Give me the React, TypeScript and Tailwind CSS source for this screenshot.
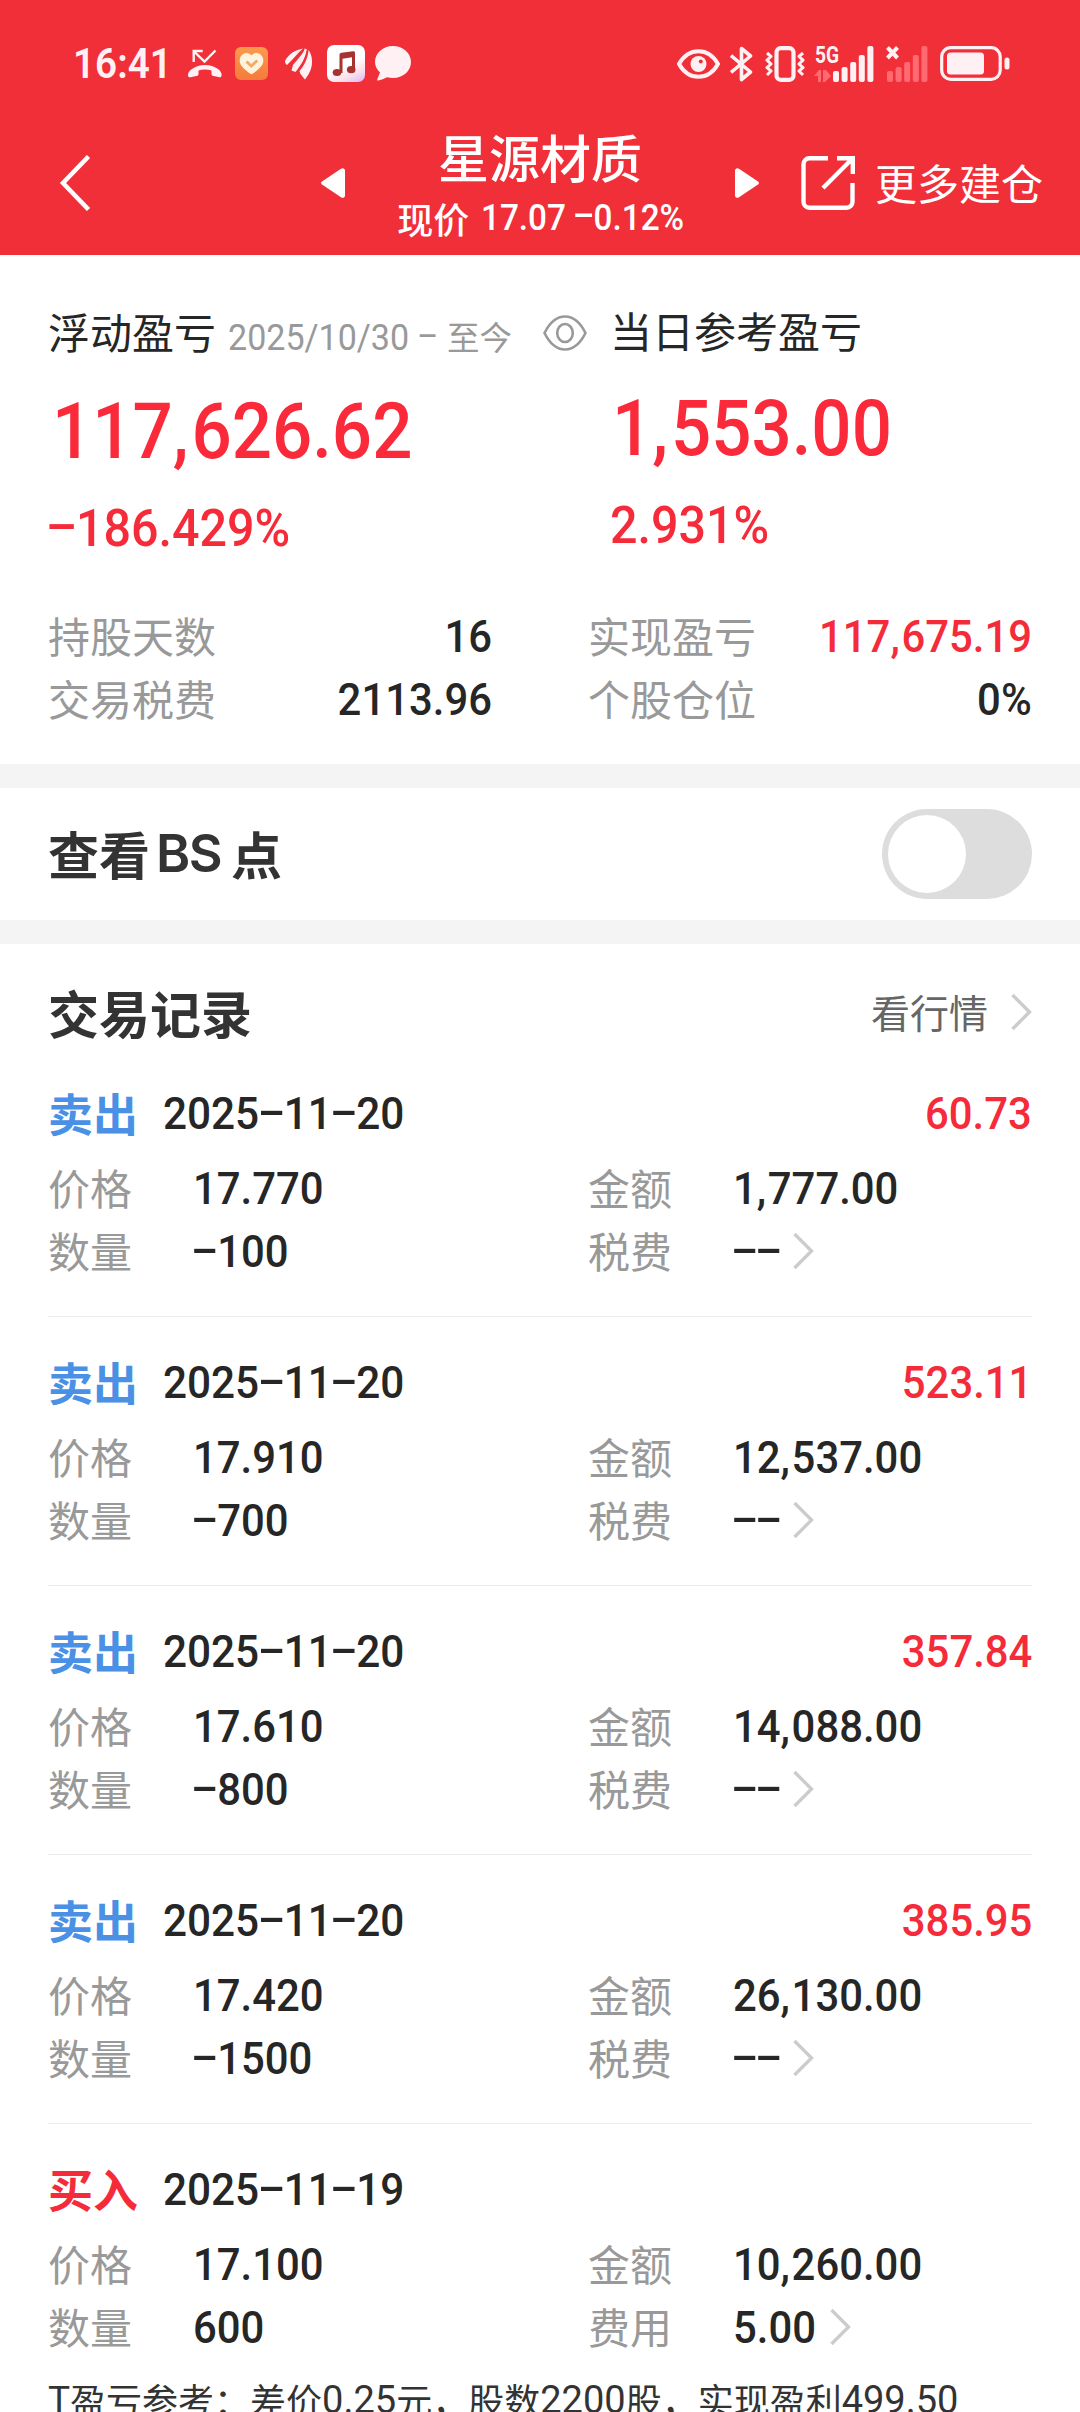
import React from "react";

type Trade = {
  side: "卖出" | "买入";
  date: string;
  profit?: string;
  price: string;
  qty: string;
  amount: string;
  feeLabel: string;
  fee: string;
};

const trades: Trade[] = [
  { side: "卖出", date: "2025-11-20", profit: "60.73", price: "17.770", qty: "-100", amount: "1,777.00", feeLabel: "税费", fee: "--" },
  { side: "卖出", date: "2025-11-20", profit: "523.11", price: "17.910", qty: "-700", amount: "12,537.00", feeLabel: "税费", fee: "--" },
  { side: "卖出", date: "2025-11-20", profit: "357.84", price: "17.610", qty: "-800", amount: "14,088.00", feeLabel: "税费", fee: "--" },
  { side: "卖出", date: "2025-11-20", profit: "385.95", price: "17.420", qty: "-1500", amount: "26,130.00", feeLabel: "税费", fee: "--" },
  { side: "买入", date: "2025-11-19", price: "17.100", qty: "600", amount: "10,260.00", feeLabel: "费用", fee: "5.00" },
];

/** Condensed figures with a wide, vertically centred dash. */
function Num({ children, className = "", right = false }: { children: string; className?: string; right?: boolean }) {
  return (
    <span
      className={`inline-block whitespace-pre font-['Roboto','Noto_Sans_CJK_SC',sans-serif] ${
        right ? "origin-right" : "origin-left"
      } ${className}`}
    >
      {children.split(/([-,])/).map((part, i) =>
        part === "-" ? (
          <span key={i} className="inline-block w-[0.58em] text-center">
            <span className="inline-block -translate-y-[0.07em] scale-x-[1.950]">-</span>
          </span>
        ) : part === "," ? (
          <span key={i} className="mr-[0.04em]">,</span>
        ) : (
          part
        )
      )}
    </span>
  );
}

function Chevron() {
  return (
    <svg width="21" height="38" viewBox="0 0 21 38" fill="none" stroke="#cccccc" strokeWidth="3.4">
      <path d="M1.5 2 18.5 19 1.5 36" />
    </svg>
  );
}

function SignalBars({ className = "" }: { className?: string }) {
  return (
    <g className={className}>
      <rect x="0" y="25" width="6" height="11" rx="2" />
      <rect x="8.6" y="21" width="6" height="15" rx="2" />
      <rect x="17.2" y="16" width="6" height="20" rx="2" />
      <rect x="25.8" y="9" width="6" height="27" rx="2" />
      <rect x="34.4" y="0" width="6" height="36" rx="2" />
    </g>
  );
}

function StatusBar() {
  return (
    <div className="flex h-[127px] items-center pl-[73px] pr-[70px] text-[#fff1f3]">
      <Num className="w-[114px] scale-x-[0.920] text-[42px] font-semibold leading-none">16:41</Num>

      <svg width="36" height="30" viewBox="0 0 36 30" fill="none">
        <path d="M28.5 1.500 17.500 12.500 7 2.500" stroke="currentColor" strokeWidth="2.400" />
        <path d="M6.700 13V2h9" stroke="currentColor" strokeWidth="2.400" />
        <path
          d="M1 27c-1-5 7-11 17-11s18 6 16.500 11c-.4 1.500-1.500 1.400-3 1.100l-5-1.100c-1.500-.3-2-1-2-2.500v-3c-4-1.300-9-1.300-13 0v3c0 1.500-.5 2.200-2 2.500l-5 1.100c-2 .4-3.100.2-3.500-1.100z"
          fill="currentColor"
        />
      </svg>

      <svg className="ml-[12px]" width="33" height="33" viewBox="0 0 33 33">
        <defs>
          <linearGradient id="orange" x1="0" y1="0" x2="0" y2="1">
            <stop offset="0" stopColor="#fb9a4c" />
            <stop offset="1" stopColor="#f57b3c" />
          </linearGradient>
        </defs>
        <rect width="33" height="33" rx="6" fill="url(#orange)" />
        <path
          d="M16.500 8.500C14.500 5.500 9.500 5 6.700 8.300 3.500 12 4.500 16.500 7 19.500c2.500 3 6 5.500 8 7 1 .7 2 .7 3 0 2-1.500 5.500-4 8-7 2.500-3 3.500-7.500.3-11.200-2.800-3.300-7.800-2.800-9.800.2z"
          fill="#fff3e0"
        />
        <path d="M11.500 14.500l4.800 4.500 6-5.500" fill="none" stroke="#f2ab63" strokeWidth="2.800" />
      </svg>

      <svg className="ml-[17px]" width="28" height="32" viewBox="0 0 28 32" fill="currentColor">
        <path d="M0 13C4 5 11 2 18 .5 13 5 10 9 2 17 .5 16 0 14.500 0 13z" />
        <path d="M19.500.5C19 5 12 12 8 17l-1.500 5.500 4 1.500C16 17 20 11 22 1.500z" />
        <path d="M23.500 2C23 10 19 18 14.500 23l1 3 4.500 5.500C25 25 27.500 19 27 12c-.3-4-1.300-7-3.500-10z" />
        <path d="M19 1C17 6 11 10.500 3 18.500M22.500 2C21 11 17 18 12 24.500" stroke="#f12f38" strokeWidth="1.300" fill="none" />
      </svg>

      <svg className="ml-[14px]" width="38" height="37" viewBox="0 0 38 37">
        <defs>
          <linearGradient id="music" x1="0.300" y1="0" x2="0.800" y2="1">
            <stop offset="0.500" stopColor="#ffffff" />
            <stop offset="0.800" stopColor="#fbe0ea" />
            <stop offset="1" stopColor="#dfc2fb" />
          </linearGradient>
        </defs>
        <rect width="38" height="37" rx="7" fill="url(#music)" />
        <g fill="#a8322f">
          <path d="M12.500 10c0-1.300.6-2 2-2.300L26 6.200c1.300-.2 2 .3 2 1.700V24h-3V12.200l-9.500 1.600V28h-3z" />
          <ellipse cx="10" cy="27.500" rx="4.300" ry="3.600" />
          <ellipse cx="24.200" cy="24.700" rx="4.300" ry="3.600" />
        </g>
      </svg>

      <svg className="ml-[10px]" width="36" height="35" viewBox="0 0 36 35" fill="currentColor">
        <path d="M18 0c10 0 18 7 18 16s-8 16-18 16c-2 0-4.200-.3-6-.8-2.500 1.300-6 2.900-9.200 3.400C2 34.700 2 34 2.300 33.200L5 26.500C2 23.500 0 20 0 16 0 7 8 0 18 0z" />
      </svg>

      <div className="ml-auto flex items-center">
        <svg width="43" height="30" viewBox="0 0 43 30" fill="none">
          <path d="M2 15C7 6 14 2.200 21.500 2.200S36 6 41 15c-5 9-12 12.800-19.500 12.800S7 24 2 15z" stroke="currentColor" strokeWidth="4" strokeLinejoin="round" />
          <circle cx="21.500" cy="15" r="8" fill="currentColor" />
          <circle cx="23.800" cy="12.500" r="2" fill="#f12f38" />
        </svg>
        <svg className="ml-[10px]" width="24" height="36" viewBox="0 0 24 36" fill="none" stroke="currentColor" strokeWidth="3.600" strokeLinejoin="round">
          <path d="M1 9.500 20.500 26 11.500 33.500V2.500L20.500 10 1 26.500" />
        </svg>
        <svg className="ml-[11px]" width="40" height="36" viewBox="0 0 40 36" fill="none" stroke="currentColor">
          <rect x="11.500" y="2.200" width="17" height="31.600" rx="4" strokeWidth="4.200" />
          <path d="M2 7l4 3.500-4 3.700L6 18l-4 3.700L6 25l-4 4M38 7l-4 3.500 4 3.700-4 3.800 4 3.700-4 3.300 4 4" strokeWidth="3" strokeLinejoin="round" />
        </svg>
        <div className="relative ml-[28px] h-[36px] w-[41px]">
          <svg width="41" height="36" viewBox="0 0 41 36" fill="currentColor">
            <SignalBars />
          </svg>
          <svg className="absolute -left-[19px] top-[24px]" width="17" height="12" viewBox="0 0 17 12" fill="#ff6a73">
            <path d="M0 6 5 0h2v12H4V6zM9 0h3l5 6-4 4-2 2H9z" />
          </svg>
          <span className="absolute -left-[18px] -top-[3px] origin-left scale-x-[0.800] font-['Roboto',sans-serif] text-[24px] font-bold leading-none">
            5G
          </span>
        </div>
        <svg className="ml-[12px]" width="42" height="36" viewBox="0 0 42 36">
          <g transform="translate(1 0)">
            <SignalBars className="fill-[#ff6a73]" />
          </g>
          <path d="M1.500 1.500 11.500 12M11.500 1.500 1.500 12" stroke="currentColor" strokeWidth="4" />
        </svg>
        <svg className="ml-[12px]" width="70" height="35" viewBox="0 0 70 35" fill="none">
          <rect x="1.700" y="1.700" width="58.500" height="31.600" rx="9" stroke="currentColor" strokeWidth="3.200" />
          <rect x="7" y="6.500" width="37" height="22" rx="3.500" fill="currentColor" />
          <rect x="64.500" y="11.500" width="5" height="12" rx="2.500" fill="currentColor" />
        </svg>
      </div>
    </div>
  );
}

function NavBar() {
  return (
    <div className="flex h-[112px] items-center pl-[59px] text-white">
      <svg width="33" height="56" viewBox="0 0 33 56" fill="none" stroke="currentColor" strokeWidth="4.500">
        <path d="M29.500 1.500 4 28l25.500 26.500" />
      </svg>
      <div className="ml-[229px] flex w-[438px] items-center justify-between">
        <svg width="24" height="30" viewBox="0 0 24 30" fill="currentColor">
          <path d="M1 13.500 20 .8c2-1.300 4-.3 4 2v24.400c0 2.300-2 3.300-4 2L1 16.500c-1.300-.9-1.300-2.100 0-3z" />
        </svg>
        <div className="flex flex-col items-center pt-[7px]">
          <div className="h-[62px] text-[51px] font-medium leading-[60px]">星源材质</div>
          <div className="flex h-[60px] items-center gap-[12px] pl-[3px] text-[36px] font-medium leading-[60px]">
            <span>现价</span>
            <Num className="-mr-[15px] scale-x-[0.925] pt-px">17.07 -0.12%</Num>
          </div>
        </div>
        <svg width="24" height="30" viewBox="0 0 24 30" fill="currentColor">
          <path d="M23 13.500 4 .8C2-.5 0 .5 0 2.800v24.400c0 2.300 2 3.300 4 2l19-12.700c1.300-.9 1.300-2.100 0-3z" />
        </svg>
      </div>
      <svg className="ml-[42px]" width="56" height="54" viewBox="0 0 56 54" fill="none" stroke="currentColor" strokeWidth="4.400">
        <path d="M27 2.200H8.500a6 6 0 0 0-6 6v37.600a6 6 0 0 0 6 6h37a6 6 0 0 0 6-6V27" />
        <path d="M36 2.200h15.800V18M51.500 2.500 22 32" />
      </svg>
      <span className="-mt-[3px] ml-[18px] text-[42px] leading-[60px]">更多建仓</span>
    </div>
  );
}

function Stat({ label, value, red = false }: { label: string; value: string; red?: boolean }) {
  return (
    <div className="flex h-[63px] items-center justify-between leading-[63px]">
      <span className="text-[42px] text-[#999999]">{label}</span>
      <Num right className={`scale-x-[0.930] pt-[3px] text-[45px] font-medium ${red ? "text-[#f52b3a]" : "text-[#262626]"}`}>
        {value}
      </Num>
    </div>
  );
}

function Summary() {
  return (
    <section className="h-[509px] px-12">
      <div className="flex">
        <div className="w-[495px] pt-[46px]">
          <div className="flex h-[60px] items-center leading-[60px]">
            <span className="text-[42px] text-[#262626]">浮动盈亏</span>
            <span className="ml-[12px] flex items-center pt-[9px] text-[#999999]">
              <Num className="w-[219px] scale-x-[0.920] pt-[5px] text-[37px]">2025/10/30 -</Num>
              <span className="pt-[1px] text-[32.500px]">至今</span>
            </span>
          </div>
          <Num className="ml-[4px] mt-[31px] h-[80px] scale-x-[0.908] text-[78px] font-medium leading-[80px] text-[#fb2a3a]">117,626.62</Num>
          <div className="mt-[27px] h-[60px]">
            <Num className="scale-x-[0.940] text-[51.500px] font-medium leading-[60px] text-[#f52b3a]">-186.429%</Num>
          </div>
        </div>
        <svg className="mt-[60px]" width="44" height="36" viewBox="0 0 44 36" fill="none" stroke="#999999" strokeWidth="2.600">
          <path d="M1.500 18C7 7 13.500 1.500 22 1.500S37 7 42.500 18C37 29 30.500 34.500 22 34.500S7 29 1.500 18z" />
          <ellipse cx="22" cy="18" rx="7.800" ry="9" />
        </svg>
        <div className="ml-[23px] pt-[45px]">
          <div className="h-[60px] text-[42px] leading-[60px] text-[#262626]">当日参考盈亏</div>
          <Num className="ml-[2px] mt-[29px] h-[80px] scale-x-[0.908] text-[78px] font-medium leading-[80px] text-[#fb2a3a]">1,553.00</Num>
          <div className="mt-[27px] h-[60px]">
            <Num className="scale-x-[0.940] text-[51.500px] font-medium leading-[60px] text-[#f52b3a]">2.931%</Num>
          </div>
        </div>
      </div>
      <div className="mt-[44px] grid grid-cols-2 gap-x-24">
        <Stat label="持股天数" value="16" />
        <Stat label="实现盈亏" value="117,675.19" red />
        <Stat label="交易税费" value="2113.96" />
        <Stat label="个股仓位" value="0%" />
      </div>
    </section>
  );
}

function Field({ label, value, arrow = false }: { label: string; value: string; arrow?: boolean }) {
  return (
    <div className="flex h-[63px] items-center leading-[63px]">
      <span className="w-[145px] text-[42px] text-[#999999]">{label}</span>
      <Num className="scale-x-[0.930] pt-[3px] text-[45px] font-medium text-[#262626]">{value}</Num>
      {arrow && (
        <span className="ml-[8px] pt-[2px]">
          <Chevron />
        </span>
      )}
    </div>
  );
}

function TradeRow({ t, last }: { t: Trade; last: boolean }) {
  return (
    <article className={`pt-8 ${last ? "" : "border-b border-[#ebebeb] pb-[35px]"}`}>
      <div className="flex h-16 items-center leading-[64px]">
        <span className={`w-[115px] pt-[2px] text-[45px] font-bold ${t.side === "卖出" ? "text-[#4a91e6]" : "text-[#f52b3a]"}`}>
          {t.side}
        </span>
        <Num className="scale-x-[0.940] pt-[3px] text-[45px] font-medium text-[#262626]">{t.date}</Num>
        {t.profit && (
          <Num right className="ml-auto scale-x-[0.930] pt-[3px] text-[45px] font-medium text-[#f52b3a]">
            {t.profit}
          </Num>
        )}
      </div>
      <div className="mt-[11px] grid grid-cols-2 gap-x-24">
        <Field label="价格" value={t.price} />
        <Field label="金额" value={t.amount} />
        <Field label="数量" value={t.qty} />
        <Field label={t.feeLabel} value={t.fee} arrow />
      </div>
    </article>
  );
}

export default function App() {
  return (
    <div className="h-[2412px] w-[1080px] overflow-hidden bg-white font-['Noto_Sans_CJK_SC',sans-serif]">
      <header className="h-[255px] bg-[#f12f38]">
        <StatusBar />
        <NavBar />
      </header>

      <Summary />

      <div className="h-6 bg-[#f4f4f4]" />
      <section className="flex h-[132px] items-center justify-between px-12">
        <h2 className="flex items-center pb-[3px] text-[51px] font-bold leading-[60px] text-[#333333]">
          查看
          <span className="ml-[6px] mr-[10px] pt-[3px] font-['Inter',sans-serif] text-[52px] font-semibold tracking-[-0.030em]">BS</span>
          点
        </h2>
        <div className="h-[90px] w-[150px] rounded-full bg-[#dddddd] p-[6px]">
          <div className="size-[78px] rounded-full bg-white" />
        </div>
      </section>
      <div className="h-6 bg-[#f4f4f4]" />

      <section className="px-12">
        <div className="flex h-[104px] items-center justify-between pt-8">
          <h2 className="text-[51px] font-bold leading-[60px] text-[#333333]">交易记录</h2>
          <div className="flex items-center text-[39px] leading-[60px] text-[#666666]">
            <span className="pb-[3px]">看行情</span>
            <span className="ml-[23px]">
              <Chevron />
            </span>
          </div>
        </div>
        {trades.map((t, i) => (
          <TradeRow key={i} t={t} last={i === trades.length - 1} />
        ))}
        <p className="mt-[12px] flex h-[60px] items-center whitespace-nowrap text-[36px] leading-[60px] text-[#333333]">
          <Num className="pt-[2px] text-[37px]">T</Num>盈亏参考：差价<Num className="pt-[2px] text-[38px]">0.25</Num>元，股数
          <Num className="pt-[2px] text-[38px]">2200</Num>股，实现盈利<Num className="pt-[2px] text-[38px]">499.50</Num>
        </p>
      </section>
    </div>
  );
}
